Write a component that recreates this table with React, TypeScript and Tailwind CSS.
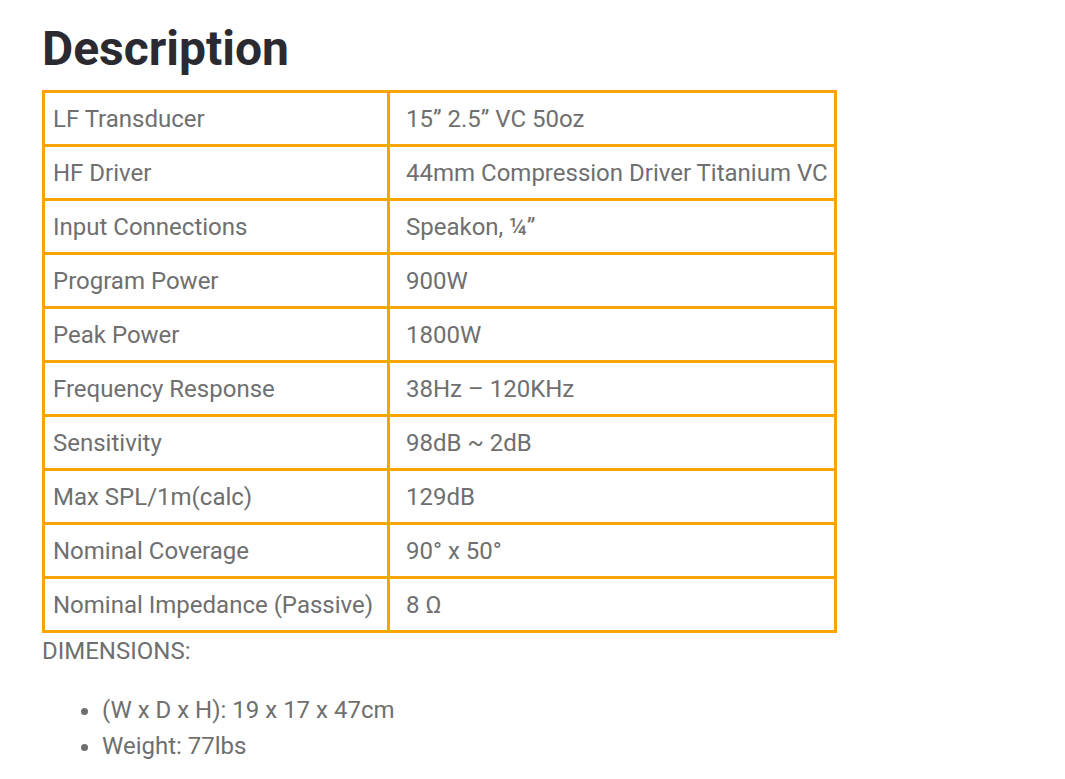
import React from "react";

const rows: [string, string][] = [
  ["LF Transducer", "15” 2.5” VC 50oz"],
  ["HF Driver", "44mm Compression Driver Titanium VC"],
  ["Input Connections", "Speakon, ¼”"],
  ["Program Power", "900W"],
  ["Peak Power", "1800W"],
  ["Frequency Response", "38Hz – 120KHz"],
  ["Sensitivity", "98dB ~ 2dB"],
  ["Max SPL/1m(calc)", "129dB"],
  ["Nominal Coverage", "90° x 50°"],
  ["Nominal Impedance (Passive)", "8 Ω"],
];

export default function App() {
  return (
    <div className="min-h-screen bg-white pl-[42px] pt-[22px] font-['Roboto',sans-serif]">
      <h1 className="text-[48px] font-bold leading-[54px] text-[#2b2a30]">Description</h1>
      <table className="mt-[14px] w-[795px] border-collapse border-[3px] border-[#f6a502] text-[24px] text-[#6f6f6f]">
        <tbody>
          {rows.map(([k, v]) => (
            <tr key={k} className="h-[54px]">
              <td className="w-[345px] whitespace-nowrap border-[3px] border-[#f6a502] pl-[8px] align-middle">{k}</td>
              <td className="whitespace-nowrap border-[3px] border-[#f6a502] pl-[16px] align-middle">{v}</td>
            </tr>
          ))}
        </tbody>
      </table>
      <p className="mt-[4px] text-[24px] leading-[28px] text-[#6f6f6f]">DIMENSIONS:</p>
      <ul className="mt-[27px] list-disc pl-[60px] text-[24px] leading-[36px] text-[#6f6f6f] marker:text-[#6f6f6f]">
        <li>(W x D x H): 19 x 17 x 47cm</li>
        <li>Weight: 77lbs</li>
      </ul>
    </div>
  );
}
